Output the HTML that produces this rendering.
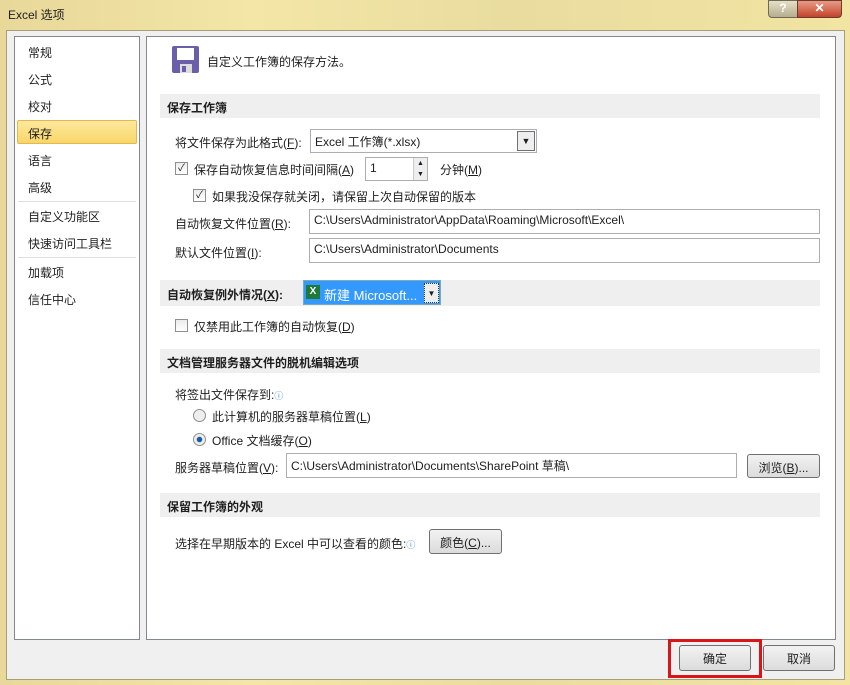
<!DOCTYPE html><html><head><meta charset="utf-8"><style>
*{margin:0;padding:0;box-sizing:border-box}
body{width:850px;height:685px;position:relative;overflow:hidden;font:12px "Liberation Sans","Noto Sans CJK SC",sans-serif;color:#1e1e1e;background:linear-gradient(90deg,#e8d89a,#f3e6a6 30%,#e9dc9f 60%,#f2e4a2);}
.a{position:absolute}
.body{left:6px;top:30px;width:839px;height:650px;background:#f0f0f0;border:1px solid #a89f7a}
.panel{background:#fff;border:1px solid #828790}
.nav{left:28px;font-size:12px}
.sec{left:160px;width:660px;height:24px;background:#efefef;font-weight:bold;padding:5px 0 0 7px}
.in{background:#fff;border:1px solid #abadb3;padding:3px 4px}
.cb{width:13px;height:13px;border:1px solid #8e8f8f;background:linear-gradient(#ececec,#fff)}
.rd{width:13px;height:13px;border:1px solid #8e8f8f;border-radius:50%;background:#eee}
.btn{border:1px solid #707070;border-radius:3px;background:linear-gradient(#f2f2f2,#dcdcdc);text-align:center;padding-top:4px}
</style></head><body>
<div class="a" style="left:8px;top:6px;font-size:12px">Excel 选项</div>
<div class="a" style="left:768px;top:0;width:30px;height:18px;border:1px solid #6d6a55;border-radius:0 0 0 4px;background:linear-gradient(#e6e0c6,#b4ad8e);text-align:center;color:#fff;font-weight:bold">?</div>
<div class="a" style="left:797px;top:0;width:45px;height:18px;border:1px solid #6d3a2c;border-radius:0 0 4px 0;background:linear-gradient(#e79b86,#c4432b);text-align:center;color:#fff;font-weight:bold">✕</div>
<div class="a body"></div>
<div class="a panel" style="left:14px;top:36px;width:126px;height:604px"></div>
<div class="a panel" style="left:146px;top:36px;width:690px;height:604px"></div>
<div class="a nav" style="top:44px">常规</div>
<div class="a nav" style="top:71px">公式</div>
<div class="a nav" style="top:98px">校对</div>
<div class="a" style="left:17px;top:120px;width:120px;height:24px;background:linear-gradient(#fde99c,#f8d66a);border:1px solid #e4b94c;border-radius:2px"></div>
<div class="a nav" style="top:125px">保存</div>
<div class="a nav" style="top:152px">语言</div>
<div class="a nav" style="top:179px">高级</div>
<div class="a" style="left:18px;top:201px;width:118px;border-top:1px solid #ddd"></div>
<div class="a nav" style="top:208px">自定义功能区</div>
<div class="a nav" style="top:235px">快速访问工具栏</div>
<div class="a" style="left:18px;top:257px;width:118px;border-top:1px solid #ddd"></div>
<div class="a nav" style="top:264px">加载项</div>
<div class="a nav" style="top:291px">信任中心</div>
<svg class="a" style="left:172px;top:46px" width="28" height="28"><rect x="0" y="0" width="27" height="27" rx="2" fill="#6a5fa8"/><rect x="5" y="2" width="17" height="12" fill="#fff"/><rect x="8" y="18" width="12" height="9" fill="#ddd"/><rect x="10" y="20" width="4" height="6" fill="#6a5fa8"/></svg>
<div class="a" style="left:207px;top:53px">自定义工作簿的保存方法。</div>
<div class="a sec" style="top:94px">保存工作簿</div>
<div class="a" style="left:175px;top:134px">将文件保存为此格式(<u>F</u>):</div>
<div class="a in" style="left:310px;top:129px;width:227px;height:24px">Excel 工作簿(*.xlsx)</div>
<div class="a" style="left:517px;top:131px;width:18px;height:20px;border:1px solid #707070;background:#eee;font-size:9px;text-align:center;padding-top:4px">▼</div>
<div class="a cb" style="left:175px;top:162px;font-size:10px;line-height:11px;text-align:center">✓</div>
<div class="a" style="left:194px;top:161px">保存自动恢复信息时间间隔(<u>A</u>)</div>
<div class="a in" style="left:365px;top:157px;width:63px;height:24px">1</div>
<div class="a" style="left:413px;top:158px;width:14px;height:22px;border-left:1px solid #ccc;background:#eee;font-size:7px;text-align:center;line-height:11px">▲<br>▼</div>
<div class="a" style="left:440px;top:161px">分钟(<u>M</u>)</div>
<div class="a cb" style="left:193px;top:189px;font-size:10px;line-height:11px;text-align:center">✓</div>
<div class="a" style="left:212px;top:188px">如果我没保存就关闭，请保留上次自动保留的版本</div>
<div class="a" style="left:175px;top:215px">自动恢复文件位置(<u>R</u>):</div>
<div class="a in" style="left:309px;top:209px;width:511px;height:25px">C:\Users\Administrator\AppData\Roaming\Microsoft\Excel\</div>
<div class="a" style="left:175px;top:244px">默认文件位置(<u>I</u>):</div>
<div class="a in" style="left:309px;top:238px;width:511px;height:25px">C:\Users\Administrator\Documents</div>
<div class="a sec" style="top:280px;height:26px;padding-top:6px">自动恢复例外情况(<u>X</u>):</div>
<div class="a" style="left:303px;top:280px;width:138px;height:25px;background:#3399ff;border:1px solid #7ab;color:#fff;padding:4px 0 0 20px;font-size:13px">新建 Microsoft...</div>
<div class="a" style="left:306px;top:285px;width:14px;height:14px;background:#1e7a3a;color:#fff;font-size:10px;font-weight:bold;text-align:center;line-height:14px">X</div>
<div class="a" style="left:424px;top:283px;width:15px;height:20px;border:1px dotted #333;background:#eee;font-size:8px;text-align:center;padding-top:5px">▼</div>
<div class="a cb" style="left:175px;top:319px"></div>
<div class="a" style="left:194px;top:318px">仅禁用此工作簿的自动恢复(<u>D</u>)</div>
<div class="a sec" style="top:349px">文档管理服务器文件的脱机编辑选项</div>
<div class="a" style="left:175px;top:386px">将签出文件保存到:<span style="color:#48c;font-size:9px">ⓘ</span></div>
<div class="a rd" style="left:193px;top:409px"></div>
<div class="a" style="left:212px;top:408px">此计算机的服务器草稿位置(<u>L</u>)</div>
<div class="a rd" style="left:193px;top:433px;background:radial-gradient(#1a5aa0 30%,#eee 40%)"></div>
<div class="a" style="left:212px;top:432px">Office 文档缓存(<u>O</u>)</div>
<div class="a" style="left:175px;top:459px">服务器草稿位置(<u>V</u>):</div>
<div class="a in" style="left:286px;top:453px;width:451px;height:25px">C:\Users\Administrator\Documents\SharePoint 草稿\</div>
<div class="a btn" style="left:747px;top:454px;width:73px;height:24px">浏览(<u>B</u>)...</div>
<div class="a sec" style="top:493px">保留工作簿的外观</div>
<div class="a" style="left:175px;top:535px">选择在早期版本的 Excel 中可以查看的颜色:<span style="color:#48c;font-size:9px">ⓘ</span></div>
<div class="a btn" style="left:429px;top:529px;width:73px;height:25px">颜色(<u>C</u>)...</div>
<div class="a btn" style="left:679px;top:645px;width:72px;height:26px">确定</div>
<div class="a btn" style="left:763px;top:645px;width:72px;height:26px">取消</div>
<div class="a" style="left:668px;top:639px;width:94px;height:39px;border:3px solid #d9141a"></div>
</body></html>
